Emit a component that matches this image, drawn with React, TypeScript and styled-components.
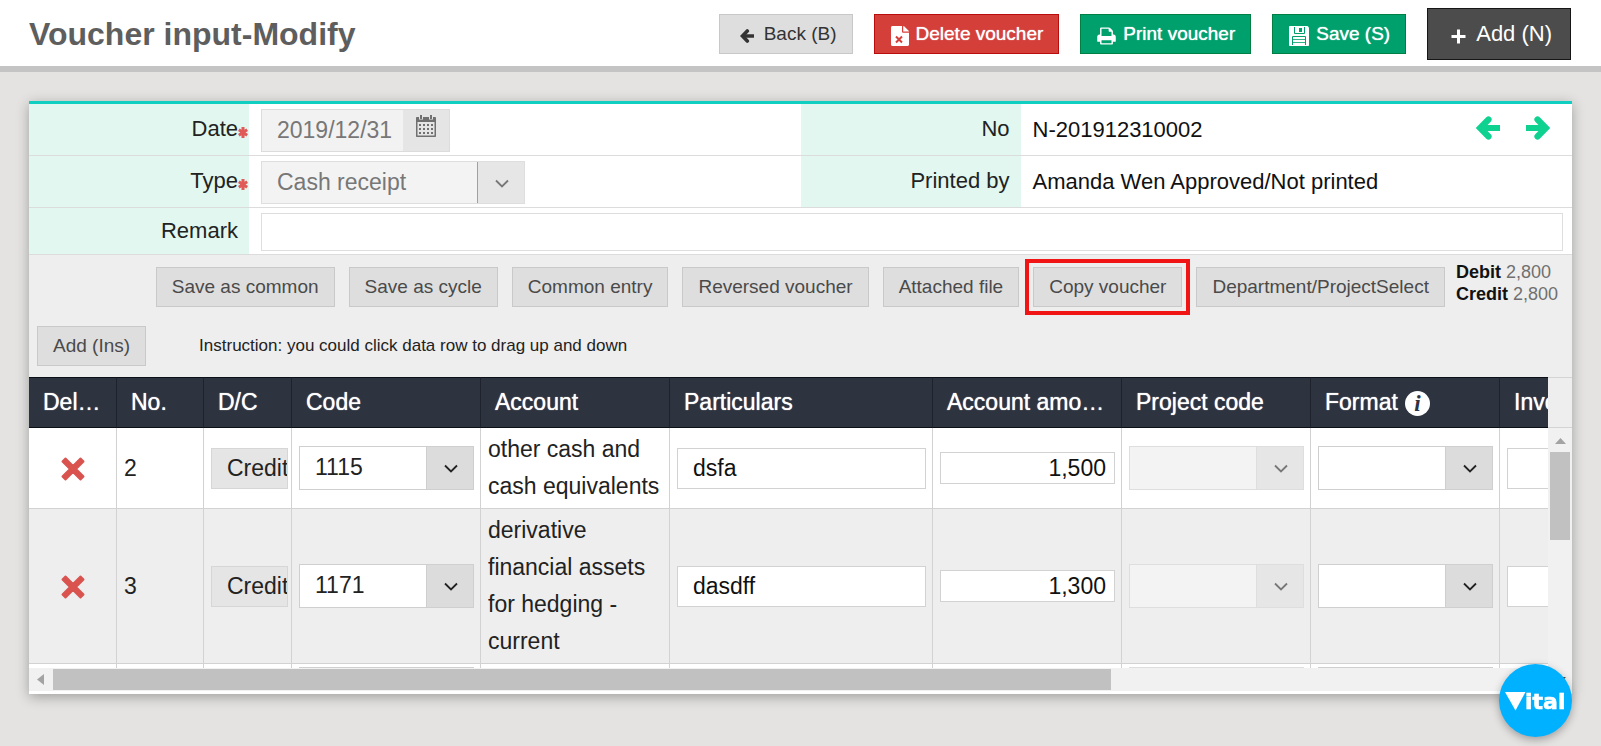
import React from 'react';
import styled, { createGlobalStyle, css } from 'styled-components';

const GlobalStyle = createGlobalStyle`
  *, *::before, *::after { box-sizing: border-box; }
  body {
    margin: 0;
    min-height: 100vh;
    background: #e4e3e2;
    color: #222;
    font-family: 'Liberation Sans', Arial, sans-serif;
    font-size: 22px;
  }
  button, input, select { font-family: inherit; margin: 0; border-radius: 0; }
  button { cursor: pointer; }
`;

/* ---------- icons ---------- */

const ArrowIcon = ({ size, flip = false }: { size: number; flip?: boolean }) => (
  <svg width={size} height={size} viewBox="0 0 24 24" aria-hidden="true">
    <g transform={flip ? 'rotate(180 12 12)' : undefined} fill="none" stroke="currentColor" strokeWidth="6">
      <path d="M12.500 3.500 4.200 12l8.300 8.500" strokeLinejoin="miter" strokeLinecap="round" strokeWidth="6.200" />
      <path d="M5 12h19" />
    </g>
  </svg>
);

const PlusIcon = () => (
  <svg width="15" height="15" viewBox="0 0 15 15" aria-hidden="true">
    <path d="M7.500 0.500v14M0.500 7.500h14" stroke="currentColor" strokeWidth="3" />
  </svg>
);

const AsteriskIcon = () => (
  <svg width="10" height="11" viewBox="0 0 10 11" aria-hidden="true">
    <path d="M5 0v11M0.800 2.700l8.400 5.600M9.200 2.700L0.800 8.300" stroke="currentColor" strokeWidth="3" />
  </svg>
);

const FileDeleteIcon = () => (
  <svg width="18" height="20" viewBox="0 0 18 20" aria-hidden="true">
    <path fill="currentColor" d="M1.500 0H11v5.500c0 .8.500 1.300 1.300 1.300H18V18.500c0 .8-.7 1.500-1.500 1.500h-15C.7 20 0 19.300 0 18.500v-17C0 .7.7 0 1.500 0z" />
    <path fill="currentColor" d="M12.200 0c.5.100.9.300 1.200.600l4 4c.300.300.500.600.600 1h-5.800z" />
    <path d="M5 10.500l6 6M11 10.500l-6 6" stroke="#d43f3a" strokeWidth="2" />
  </svg>
);

const PrintIcon = () => (
  <svg width="19" height="20" viewBox="0 0 1664 1792" aria-hidden="true">
    <path
      fill="currentColor"
      fillRule="evenodd"
      d="M384 1536h896v-256h-896v256zm0-640h896v-384h-160q-40 0-68-28t-28-68v-160h-640v640zm1280 64v416q0 13-9.500 22.500t-22.500 9.500h-224v160q0 40-28 68t-68 28h-960q-40 0-68-28t-28-68v-160h-224q-13 0-22.500-9.500t-9.500-22.500v-416q0-79 56.500-135.500t135.500-56.500h64v-544q0-40 28-68t68-28h672q40 0 88 20t76 48l152 152q28 28 48 76t20 88v256h64q79 0 135.500 56.500t56.500 135.500z"
    />
  </svg>
);

const SaveIcon = () => (
  <svg width="20" height="20" viewBox="0 0 20 20" aria-hidden="true">
    <path fill="currentColor" d="M1 0h17.500L20 1.500V19c0 .6-.4 1-1 1H1c-.6 0-1-.4-1-1V1c0-.6.4-1 1-1z" />
    <g fill="none" stroke="#00a06d">
      <path d="M5.500 1v6.500h10V1" />
      <path d="M3.500 19V10.500h13V19" />
      <path d="M4 13.500h12M4 16.500h12" opacity="0.8" />
    </g>
    <path fill="#00a06d" d="M10 2h3v4h-3z" />
  </svg>
);

const CalendarIcon = () => (
  <svg width="20" height="22" viewBox="0 0 20 22" aria-hidden="true">
    <path fill="currentColor" fillRule="evenodd" d="M1 2h18c.6 0 1 .4 1 1V21c0 .6-.4 1-1 1H1c-.6 0-1-.4-1-1V3c0-.6.4-1 1-1zM1.500 7v13.500h17V7z" />
    <path d="M5 0v4.500M15 0v4.500" stroke="#e5e5e5" strokeWidth="4" />
    <path d="M5 0v4M15 0v4" stroke="currentColor" strokeWidth="2" />
    <path d="M3 10h14M3 14h14M3 18h14" stroke="currentColor" strokeWidth="2" strokeDasharray="2 2" />
  </svg>
);

const ChevronIcon = () => (
  <svg width="14" height="9" viewBox="0 0 14 9" aria-hidden="true">
    <path d="M1 1.500l6 6 6-6" fill="none" stroke="currentColor" strokeWidth="1.800" />
  </svg>
);

const CrossIcon = () => (
  <svg width="24" height="24" viewBox="0 0 24 24" aria-hidden="true">
    <path
      d="M4.500 1.500L12 9l7.500-7.500 3 3L15 12l7.500 7.500-3 3L12 15l-7.500 7.500-3-3L9 12 1.500 4.500z"
      fill="#d9534f"
      stroke="#d9534f"
      strokeWidth="2"
      strokeLinejoin="round"
    />
  </svg>
);

/* ---------- page header ---------- */

const PageHeader = styled.header`
  display: flex;
  align-items: center;
  justify-content: space-between;
  height: 72px;
  padding: 2px 30px 0 29px;
  background: #fff;
  border-bottom: 6px solid #c4c4c4;
`;

const Title = styled.h1`
  margin: 0;
  font-size: 32px;
  line-height: 40px;
  color: #5e5e5e;
`;

const HeaderActions = styled.div`
  display: flex;
  align-items: center;
  gap: 21px;
`;

type Tone = 'plain' | 'danger' | 'success' | 'dark';

const tones = {
  plain: css`background: #dedede; border-color: #c8c8c8; color: #333;`,
  danger: css`background: #d43f3a; border-color: #b90c0c; color: #fff;`,
  success: css`background: #00a06d; border-color: #007f45; color: #fff;`,
  dark: css`background: #4c4c4c; border-color: #161616; color: #fff;`,
};

const HeaderButton = styled.button<{ $tone: Tone; $large?: boolean }>`
  display: inline-flex;
  align-items: center;
  gap: ${(p) => (p.$tone === 'plain' || p.$large ? 10 : 7)}px;
  height: ${(p) => (p.$large ? 52 : 40)}px;
  padding: 0 ${(p) => (p.$large ? 18 : 15)}px 0 ${(p) => (p.$large ? 23 : p.$tone === 'plain' ? 20 : 16)}px;
  border: 1px solid;
  font-size: ${(p) => (p.$large ? 22 : 19)}px;
  text-shadow: ${(p) => (p.$tone === 'danger' || p.$tone === 'success' ? '0 0 1px #fff' : 'none')};
  ${(p) => tones[p.$tone]}

  svg { position: relative; top: 2px; }
`;

/* ---------- voucher card ---------- */

const Main = styled.main`
  padding: 29px;
`;

const Card = styled.section`
  background: #fff;
  border-top: 3px solid #10cfc0;
  box-shadow: 0 3px 12px rgba(0, 0, 0, 0.3);
`;

const FormRow = styled.div`
  display: flex;
  border-bottom: 1px solid #dcdcdc;
`;

const FormField = styled.div`
  flex: 1 1 0;
  display: flex;
  min-width: 0;
`;

const FieldLabel = styled.label`
  flex: none;
  display: flex;
  align-items: center;
  justify-content: flex-end;
  width: 220px;
  padding-bottom: 1px;
  background: #e1f7ef;
`;

const RequiredSlot = styled.span`
  display: flex;
  width: 11px;
  padding-top: 6px;
  color: #e05a57;
`;

const FieldValue = styled.div<{ $text?: boolean }>`
  flex: 1;
  display: flex;
  align-items: center;
  min-width: 0;
  padding: ${(p) => (p.$text ? '4px 9px 4px 12px' : '5px 9px 3px 12px')};
  color: #111;
`;

const VoucherNav = styled.div`
  display: flex;
  gap: 26px;
  margin-left: auto;
  padding: 0 13px 4px 0;
`;

const NavButton = styled.button`
  display: flex;
  padding: 0;
  border: 0;
  background: none;
  color: #0fd290;
`;

const DateBox = styled.div`
  display: flex;
  width: 189px;
  height: 43px;
  border: 1px solid #dcdcdc;
`;

const DateInput = styled.input`
  flex: 1;
  min-width: 0;
  padding: 0 0 0 15px;
  border: 0;
  background: #f2f2f2;
  color: #777;
  font-size: 23px;
`;

const DateButton = styled.button`
  flex: none;
  width: 46px;
  padding: 0 0 6px;
  border: 0;
  background: #e5e5e5;
  color: #707070;
`;

const RemarkInput = styled.input`
  width: 100%;
  height: 38px;
  padding: 0 15px;
  border: 1px solid #dedede;
  font-size: 23px;
`;

/* ---------- drop-down ---------- */

const ComboFrame = styled.span<{ $disabled?: boolean; $divided?: boolean; $wide?: boolean }>`
  position: relative;
  display: block;
  width: ${(p) => (p.$wide ? '264px' : '100%')};
  height: ${(p) => (p.$wide ? 43 : 44)}px;
  border: 1px solid ${(p) => (p.$disabled ? '#dedede' : '#cfcfcf')};
  background: linear-gradient(
      to left,
      ${(p) => (p.$disabled ? '#e6e6e6' : '#dcdcdc')} 46px,
      ${(p) => (p.$divided ? '#a0a0a0' : p.$disabled ? '#dedede' : '#cfcfcf')} 46px 47px,
      ${(p) => (p.$disabled ? '#f3f3f3' : '#fff')} 47px
    );
  color: ${(p) => (p.$disabled ? '#777' : '#222')};

  svg {
    position: absolute;
    top: 50%;
    right: 15px;
    margin-top: -4px;
    pointer-events: none;
  }
`;

const ComboSelect = styled.select`
  appearance: none;
  display: block;
  width: 100%;
  height: 100%;
  padding: 0 48px 2px 15px;
  border: 0;
  background: none;
  color: inherit;
  font-size: 23px;
  opacity: 1;
`;

interface ComboProps {
  id?: string;
  label?: string;
  value: string;
  disabled?: boolean;
  divided?: boolean;
  wide?: boolean;
}

const Combo = ({ id, label, value, disabled, divided, wide }: ComboProps) => (
  <ComboFrame $disabled={disabled} $divided={divided} $wide={wide}>
    <ComboSelect id={id} aria-label={label} defaultValue={value} disabled={disabled}>
      <option value={value}>{value}</option>
    </ComboSelect>
    <ChevronIcon />
  </ComboFrame>
);

/* ---------- toolbars ---------- */

const Toolbar = styled.div`
  display: flex;
  align-items: flex-start;
  justify-content: flex-end;
  gap: 11px;
  padding: 6px 14px 11px;
  background: #eee;
`;

const ToolbarButtons = styled.div`
  display: flex;
  gap: 14px;
  padding-top: 6px;
`;

const ToolButton = styled.button<{ $highlighted?: boolean }>`
  height: 40px;
  padding: 0 15px 1px;
  border: 1px solid #c9c9c9;
  background: #dedede;
  color: #4a4a4a;
  font-size: 19px;
  white-space: nowrap;
  ${(p) =>
    p.$highlighted &&
    css`
      outline: 4px solid #f01414;
      outline-offset: 4px;
    `}
`;

const Totals = styled.div`
  font-size: 18px;
  line-height: 22px;
  color: #707070;
  white-space: nowrap;

  strong { color: #111; }
`;

const InstructionBar = styled.div`
  display: flex;
  align-items: center;
  gap: 53px;
  padding: 8px 8px 11px;
  background: #eee;
`;

const Instruction = styled.p`
  margin: 0;
  font-size: 17px;
  color: #222;
`;

/* ---------- entries grid ---------- */

const GridPanel = styled.div`
  display: flex;
  padding-bottom: 3px;
`;

const GridMain = styled.div`
  flex: 1;
  min-width: 0;
`;

const GridViewport = styled.div`
  height: 291px;
  overflow: hidden;
`;

const EntriesTable = styled.table`
  width: 1849px;
  table-layout: fixed;
  border-collapse: separate;
  border-spacing: 0;
  font-size: 23px;
`;

const HeadCell = styled.th`
  height: 51px;
  padding: 0 14px;
  overflow: hidden;
  background: #2d333f;
  border: solid #1d222c;
  border-width: 1px 1px 1px 0;
  border-top-color: #0a0f18;
  border-bottom-color: #0a0f18;
  color: #fff;
  font-weight: 400;
  text-align: left;
  text-overflow: ellipsis;
  text-shadow: 0 0 1px #fff;
  white-space: nowrap;
`;

const EntryRow = styled.tr`
  background: #fff;
  &:nth-child(even) { background: #eee; }
`;

const Cell = styled.td<{ $align?: 'center' }>`
  padding: 3px 6px 3px 7px;
  border: solid #d2d2d2;
  border-width: 0 1px 1px 0;
  line-height: 37px;
  text-align: ${(p) => p.$align || 'left'};
  vertical-align: middle;
`;

const RemoveButton = styled.button`
  display: inline-flex;
  padding: 0;
  border: 0;
  background: none;
  vertical-align: middle;
`;

const SideInput = styled.input`
  display: block;
  width: 77px;
  height: 41px;
  padding: 0 0 0 15px;
  border: 1px solid #d6d6d6;
  background: #e5e5e5;
  color: #222;
  font-size: 23px;
`;

const CellInput = styled.input<{ $amount?: boolean }>`
  display: block;
  width: 100%;
  height: ${(p) => (p.$amount ? 32 : 41)}px;
  padding: 0 ${(p) => (p.$amount ? 8 : 15)}px;
  border: 1px solid #d2d2d2;
  background: #fff;
  color: #111;
  font-size: 23px;
  text-align: ${(p) => (p.$amount ? 'right' : 'left')};
`;

const InfoBadge = styled.span`
  display: inline-flex;
  align-items: center;
  justify-content: center;
  width: 25px;
  height: 25px;
  margin-left: 7px;
  border-radius: 50%;
  background: #fff;
  color: #2d333f;
  font: italic bold 23px/25px 'Liberation Serif', serif;
  text-shadow: none;
  vertical-align: middle;
`;

/* ---------- scroll bars ---------- */

const ScrollColumn = styled.div`
  flex: none;
  display: flex;
  flex-direction: column;
  width: 24px;
  background: #f1f1f1;
`;

const ScrollCorner = styled.div`
  height: 51px;
  background: #eee;
  border: solid #d4d4d4;
  border-width: 1px 0;
`;

const VerticalTrack = styled.div`
  flex: 1;
  display: flex;
  flex-direction: column;
  align-items: center;
  padding: 10px 2px 8px;
  color: #a3a3a3;
`;

const VerticalThumb = styled.div`
  width: 20px;
  height: 88px;
  margin: 8px 0 auto;
  background: #c1c1c1;
`;

const HorizontalTrack = styled.div`
  display: flex;
  align-items: center;
  height: 23px;
  padding-left: 8px;
  background: #f1f1f1;
  color: #a3a3a3;
`;

const HorizontalThumb = styled.div`
  width: 70%;
  height: 21px;
  margin-left: 9px;
  background: #c1c1c1;
`;

/* ---------- chat badge ---------- */

const BrandBadge = styled.button`
  position: fixed;
  right: 29px;
  bottom: 9px;
  display: flex;
  align-items: center;
  justify-content: center;
  width: 73px;
  height: 73px;
  padding: 0;
  border: 0;
  border-radius: 50%;
  background: #00b1ff;
  box-shadow: 0 3px 8px rgba(0, 0, 0, 0.3);
`;

/* ---------- data ---------- */

const columns: { title: string; width: number; info?: boolean }[] = [
  { title: 'Delete', width: 88 },
  { title: 'No.', width: 87 },
  { title: 'D/C', width: 88 },
  { title: 'Code', width: 189 },
  { title: 'Account', width: 189 },
  { title: 'Particulars', width: 263 },
  { title: 'Account amount', width: 189 },
  { title: 'Project code', width: 189 },
  { title: 'Format', width: 189, info: true },
  { title: 'Invoice', width: 189 },
  { title: 'Tax ID', width: 189 },
];

const entries = [
  { no: 2, side: 'Credit', code: '1115', account: 'other cash and cash equivalents', text: 'dsfa', amount: '1,500' },
  { no: 3, side: 'Credit', code: '1171', account: 'derivative financial assets for hedging - current', text: 'dasdff', amount: '1,300' },
  { no: 4, side: 'Debit', code: '', account: '', text: '', amount: '' },
];

const App = () => (
  <>
    <GlobalStyle />
    <PageHeader>
      <Title>Voucher input-Modify</Title>
      <HeaderActions>
        <HeaderButton $tone="plain"><ArrowIcon size={14} />Back (B)</HeaderButton>
        <HeaderButton $tone="danger"><FileDeleteIcon />Delete voucher</HeaderButton>
        <HeaderButton $tone="success"><PrintIcon />Print voucher</HeaderButton>
        <HeaderButton $tone="success"><SaveIcon />Save (S)</HeaderButton>
        <HeaderButton $tone="dark" $large><PlusIcon />Add (N)</HeaderButton>
      </HeaderActions>
    </PageHeader>

    <Main>
      <Card>
        <FormRow>
          <FormField>
            <FieldLabel htmlFor="date">Date<RequiredSlot><AsteriskIcon /></RequiredSlot></FieldLabel>
            <FieldValue>
              <DateBox>
                <DateInput id="date" defaultValue="2019/12/31" readOnly />
                <DateButton aria-label="Choose date"><CalendarIcon /></DateButton>
              </DateBox>
            </FieldValue>
          </FormField>
          <FormField>
            <FieldLabel as="span">No<RequiredSlot /></FieldLabel>
            <FieldValue $text>
              N-201912310002
              <VoucherNav>
                <NavButton aria-label="Previous voucher"><ArrowIcon size={24} /></NavButton>
                <NavButton aria-label="Next voucher"><ArrowIcon size={24} flip /></NavButton>
              </VoucherNav>
            </FieldValue>
          </FormField>
        </FormRow>
        <FormRow>
          <FormField>
            <FieldLabel htmlFor="type">Type<RequiredSlot><AsteriskIcon /></RequiredSlot></FieldLabel>
            <FieldValue><Combo id="type" value="Cash receipt" disabled divided wide /></FieldValue>
          </FormField>
          <FormField>
            <FieldLabel as="span">Printed by<RequiredSlot /></FieldLabel>
            <FieldValue $text>Amanda Wen Approved/Not printed</FieldValue>
          </FormField>
        </FormRow>
        <FormRow>
          <FormField>
            <FieldLabel htmlFor="remark">Remark<RequiredSlot /></FieldLabel>
            <FieldValue><RemarkInput id="remark" /></FieldValue>
          </FormField>
        </FormRow>

        <Toolbar>
          <ToolbarButtons>
            <ToolButton>Save as common</ToolButton>
            <ToolButton>Save as cycle</ToolButton>
            <ToolButton>Common entry</ToolButton>
            <ToolButton>Reversed voucher</ToolButton>
            <ToolButton>Attached file</ToolButton>
            <ToolButton $highlighted>Copy voucher</ToolButton>
            <ToolButton>Department/ProjectSelect</ToolButton>
          </ToolbarButtons>
          <Totals>
            <div><strong>Debit</strong> 2,800</div>
            <div><strong>Credit</strong> 2,800</div>
          </Totals>
        </Toolbar>
        <InstructionBar>
          <ToolButton>Add (Ins)</ToolButton>
          <Instruction>Instruction: you could click data row to drag up and down</Instruction>
        </InstructionBar>

        <GridPanel>
          <GridMain>
            <GridViewport>
              <EntriesTable>
                <colgroup>
                  {columns.map((c) => <col key={c.title} width={c.width} />)}
                </colgroup>
                <thead>
                  <tr>
                    {columns.map((c) => (
                      <HeadCell key={c.title} scope="col">
                        {c.title}
                        {c.info && <InfoBadge>i</InfoBadge>}
                      </HeadCell>
                    ))}
                  </tr>
                </thead>
                <tbody>
                  {entries.map((e) => (
                    <EntryRow key={e.no}>
                      <Cell $align="center"><RemoveButton aria-label={`Delete row ${e.no}`}><CrossIcon /></RemoveButton></Cell>
                      <Cell>{e.no}</Cell>
                      <Cell><SideInput aria-label="D/C" defaultValue={e.side} readOnly /></Cell>
                      <Cell><Combo label="Code" value={e.code} /></Cell>
                      <Cell>{e.account}</Cell>
                      <Cell><CellInput aria-label="Particulars" defaultValue={e.text} /></Cell>
                      <Cell><CellInput $amount aria-label="Account amount" defaultValue={e.amount} /></Cell>
                      <Cell><Combo label="Project code" value="" disabled /></Cell>
                      <Cell><Combo label="Format" value="" /></Cell>
                      <Cell><CellInput aria-label="Invoice" /></Cell>
                      <Cell><CellInput aria-label="Tax ID" /></Cell>
                    </EntryRow>
                  ))}
                </tbody>
              </EntriesTable>
            </GridViewport>
            <HorizontalTrack>
              <svg width="7" height="11" viewBox="0 0 7 11" aria-hidden="true"><path fill="currentColor" d="M7 0v11L0 5.500z" /></svg>
              <HorizontalThumb />
            </HorizontalTrack>
          </GridMain>
          <ScrollColumn>
            <ScrollCorner />
            <VerticalTrack>
              <svg width="11" height="6" viewBox="0 0 11 6" aria-hidden="true"><path fill="currentColor" d="M0 6h11L5.500 0z" /></svg>
              <VerticalThumb />
              <svg width="11" height="6" viewBox="0 0 11 6" aria-hidden="true"><path fill="#505050" d="M0 0h11L5.500 6z" /></svg>
            </VerticalTrack>
          </ScrollColumn>
        </GridPanel>
      </Card>
    </Main>

    <BrandBadge aria-label="Vital">
      <svg width="61" height="20" viewBox="0 0 61 20" fill="#fff" aria-hidden="true">
        <path d="M0 1h20.500L10.500 19.500z" />
        <text x="20" y="18" fontFamily="DejaVu Sans" fontWeight="700" fontSize="22" stroke="#fff" strokeWidth="0.600">ital</text>
      </svg>
    </BrandBadge>
  </>
);

export default App;
